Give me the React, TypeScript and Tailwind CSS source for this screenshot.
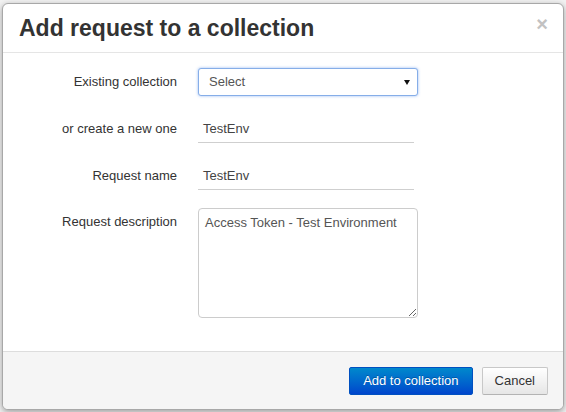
const fontStack = { fontFamily: '"Liberation Sans", Arial, sans-serif' };

const Label = ({ children, top }: { children: string; top?: boolean }) => (
    <div className={`w-[160px] shrink-0 pr-[1px] text-right leading-[28px] text-[#333] ${top ? 'self-start' : ''}`}>
        {children}
    </div>
);

const App = () => {
    return (
        <div className="w-[566px] h-[412px] overflow-hidden bg-[#f2f2f2] pt-[3px] pl-[2px] text-[13px]" style={fontStack}>
            <div className="w-[562px] rounded-[6px] border border-[#a8a8a8] bg-white shadow-[0_2px_6px_rgba(0,0,0,0.35)]">
                {/* header */}
                <div className="relative h-[49px] border-b border-[#e5e5e5] pl-[16px] pt-[9px]">
                    <h3 className="text-[23px] font-bold leading-[30px] text-[#333]">Add request to a collection</h3>
                    <span className="absolute right-[15px] top-[10px] text-[20px] font-bold leading-[20px] text-[#c2c2c2]">×</span>
                </div>

                {/* body */}
                <div className="pl-[15px] pt-[15px] pb-[33px]">
                    <div className="mb-[19px] flex items-center">
                        <Label>Existing collection</Label>
                        <div className="ml-[20px] flex h-[28px] w-[220px] items-center justify-between rounded-[3px] border border-[#86aee8] bg-white pl-[10px] pr-[7px] text-[#555] shadow-[0_0_3px_rgba(82,140,236,0.6)]">
                            <span>Select</span>
                            <svg width="6" height="5" viewBox="0 0 6 5">
                                <path d="M0 0 L6 0 L3 5 Z" fill="#111" />
                            </svg>
                        </div>
                    </div>

                    <div className="mb-[19px] flex items-center">
                        <Label>or create a new one</Label>
                        <div className="ml-[20px] flex h-[28px] w-[216px] items-center border-b border-[#cfcfcf] pl-[5px] text-[#444]">
                            TestEnv
                        </div>
                    </div>

                    <div className="mb-[18px] flex items-center">
                        <Label>Request name</Label>
                        <div className="ml-[20px] flex h-[28px] w-[216px] items-center border-b border-[#cfcfcf] pl-[5px] text-[#444]">
                            TestEnv
                        </div>
                    </div>

                    <div className="flex">
                        <Label top>Request description</Label>
                        <textarea
                            readOnly
                            defaultValue="Access Token - Test Environment"
                            className="ml-[20px] h-[110px] w-[220px] rounded-[4px] border border-[#cccccc] px-[6px] pt-[5px] text-[13px] leading-[18px] text-[#555] outline-none"
                        />
                    </div>
                </div>

                {/* footer */}
                <div className="flex h-[58px] items-center justify-end gap-[9px] rounded-b-[5px] border-t border-[#dddddd] bg-[#f5f5f5] pr-[15px] pt-[1px]">
                    <button className="flex h-[28px] items-center rounded-[2px] border border-[#0050c0] bg-gradient-to-b from-[#0088cc] to-[#0044cc] px-[13px] text-white [text-shadow:0_-1px_0_rgba(0,0,0,0.25)]">
                        Add to collection
                    </button>
                    <button className="flex h-[28px] items-center rounded-[2px] border border-[#c8c8c8] border-b-[#b3b3b3] bg-gradient-to-b from-white to-[#e6e6e6] px-[12px] text-[#333]">
                        Cancel
                    </button>
                </div>
            </div>
        </div>
    );
};

export default App;
